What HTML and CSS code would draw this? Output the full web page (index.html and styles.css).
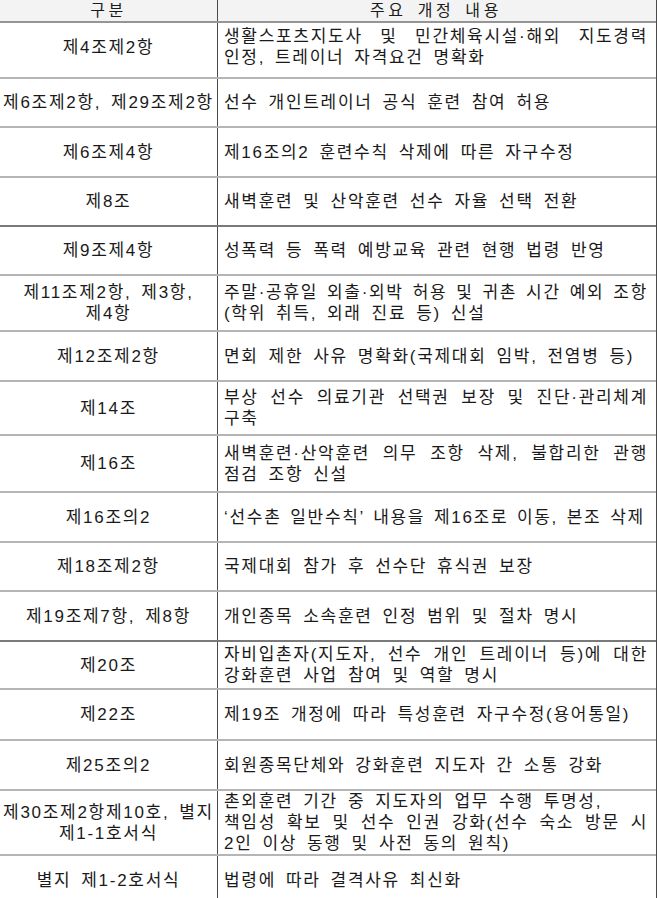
FILE: index.html
```html
<!DOCTYPE html>
<html lang="ko">
<head>
<meta charset="utf-8">
<title>주요 개정 내용</title>
<link rel="stylesheet" href="styles.css">
</head>
<body>
<div class="table">
  <div class="row head">
    <div class="c1"><span class="hd">구분</span></div>
    <div class="c2 hc"><span class="hd">주요 개정 내용</span></div>
  </div>

  <div class="row h56 up">
    <div class="c1"><span class="ln">제4조제2항</span></div>
    <div class="c2"><span class="ln j">생활스포츠지도사 및 민간체육시설·해외 지도경력</span><span class="ln">인정, 트레이너 자격요건 명확화</span></div>
  </div>

  <div class="row h49">
    <div class="c1"><span class="ln">제6조제2항, 제29조제2항</span></div>
    <div class="c2"><span class="ln">선수 개인트레이너 공식 훈련 참여 허용</span></div>
  </div>

  <div class="row h50">
    <div class="c1"><span class="ln">제6조제4항</span></div>
    <div class="c2"><span class="ln">제16조의2 훈련수칙 삭제에 따른 자구수정</span></div>
  </div>

  <div class="row h49 dark">
    <div class="c1"><span class="ln">제8조</span></div>
    <div class="c2"><span class="ln">새벽훈련 및 산악훈련 선수 자율 선택 전환</span></div>
  </div>

  <div class="row h49">
    <div class="c1"><span class="ln">제9조제4항</span></div>
    <div class="c2"><span class="ln">성폭력 등 폭력 예방교육 관련 현행 법령 반영</span></div>
  </div>

  <div class="row h56">
    <div class="c1"><span class="ln">제11조제2항, 제3항,</span><span class="ln">제4항</span></div>
    <div class="c2"><span class="ln j">주말·공휴일 외출·외박 허용 및 귀촌 시간 예외 조항</span><span class="ln">(학위 취득, 외래 진료 등) 신설</span></div>
  </div>

  <div class="row h50">
    <div class="c1"><span class="ln">제12조제2항</span></div>
    <div class="c2"><span class="ln">면회 제한 사유 명확화(국제대회 임박, 전염병 등)</span></div>
  </div>

  <div class="row h54">
    <div class="c1"><span class="ln">제14조</span></div>
    <div class="c2"><span class="ln j">부상 선수 의료기관 선택권 보장 및 진단·관리체계</span><span class="ln">구축</span></div>
  </div>

  <div class="row h57">
    <div class="c1"><span class="ln">제16조</span></div>
    <div class="c2"><span class="ln j">새벽훈련·산악훈련 의무 조항 삭제, 불합리한 관행</span><span class="ln">점검 조항 신설</span></div>
  </div>

  <div class="row h50">
    <div class="c1"><span class="ln">제16조의2</span></div>
    <div class="c2"><span class="ln tight">‘선수촌 일반수칙’ 내용을 제16조로 이동, 본조 삭제</span></div>
  </div>

  <div class="row h49">
    <div class="c1"><span class="ln">제18조제2항</span></div>
    <div class="c2"><span class="ln">국제대회 참가 후 선수단 휴식권 보장</span></div>
  </div>

  <div class="row h50 dark">
    <div class="c1"><span class="ln">제19조제7항, 제8항</span></div>
    <div class="c2"><span class="ln">개인종목 소속훈련 인정 범위 및 절차 명시</span></div>
  </div>

  <div class="row h48">
    <div class="c1"><span class="ln">제20조</span></div>
    <div class="c2"><span class="ln j">자비입촌자(지도자, 선수 개인 트레이너 등)에 대한</span><span class="ln">강화훈련 사업 참여 및 역할 명시</span></div>
  </div>

  <div class="row h51">
    <div class="c1"><span class="ln">제22조</span></div>
    <div class="c2"><span class="ln">제19조 개정에 따라 특성훈련 자구수정(용어통일)</span></div>
  </div>

  <div class="row h50">
    <div class="c1"><span class="ln">제25조의2</span></div>
    <div class="c2"><span class="ln">회원종목단체와 강화훈련 지도자 간 소통 강화</span></div>
  </div>

  <div class="row h65">
    <div class="c1"><span class="ln">제30조제2항제10호, 별지</span><span class="ln">제1-1호서식</span></div>
    <div class="c2"><span class="ln">촌외훈련 기간 중 지도자의 업무 수행 투명성,</span><span class="ln j">책임성 확보 및 선수 인권 강화(선수 숙소 방문 시</span><span class="ln">2인 이상 동행 및 사전 동의 원칙)</span></div>
  </div>

  <div class="row last">
    <div class="c1"><span class="ln">별지 제1-2호서식</span></div>
    <div class="c2"><span class="ln">법령에 따라 결격사유 최신화</span></div>
  </div>
</div>
</body>
</html>
```

FILE: styles.css
```css
html, body {
  margin: 0;
  padding: 0;
  background: #ffffff;
}

body {
  font-family: "Liberation Sans", "Noto Sans CJK KR", sans-serif;
  font-size: 17px;
  color: #1a1a1a;
  overflow: hidden;
}

.table {
  width: 657px;
  border-right: 1px solid #4a4a4a;
  box-sizing: border-box;
}

.row {
  display: grid;
  grid-template-columns: 218px 1fr;
  box-sizing: border-box;
  border-bottom: 2px solid #b5b5b5;
}

.row.dark {
  border-bottom-color: #7a7a7a;
}

.head {
  height: 23px;
  background: #f3f3f3;
  border-bottom: 2px solid #959595;
}

.h48 { height: 48px; }
.h49 { height: 49px; }
.h50 { height: 50px; }
.h51 { height: 51px; }
.h54 { height: 54px; }
.h56 { height: 56px; }
.h57 { height: 57px; }
.h65 { height: 65px; }

.last {
  height: 42px;
  border-bottom: none;
}

.c1 {
  border-right: 1px solid #4a4a4a;
  display: flex;
  flex-direction: column;
  align-items: center;
  justify-content: center;
  text-align: center;
  min-width: 0;
}

.c2 {
  display: flex;
  flex-direction: column;
  justify-content: center;
  padding: 0 8px 0 6px;
  min-width: 0;
}

.head .c2 {
  align-items: center;
}

.last .c1,
.last .c2 {
  justify-content: flex-start;
  padding-top: 14px;
}

.up .c2,
.up .c1 {
  padding-bottom: 6px;
}

.ln {
  display: block;
  line-height: 21px;
  letter-spacing: 1.7px;
  word-spacing: 3.5px;
  white-space: nowrap;
}

.ln.tight {
  word-spacing: 2.3px;
}

.ln.j {
  word-spacing: 0;
  text-align: justify;
  text-align-last: justify;
}

.hd {
  display: block;
  font-size: 16px;
  line-height: 20px;
  letter-spacing: 3.6px;
  word-spacing: 3px;
  white-space: nowrap;
}
```
